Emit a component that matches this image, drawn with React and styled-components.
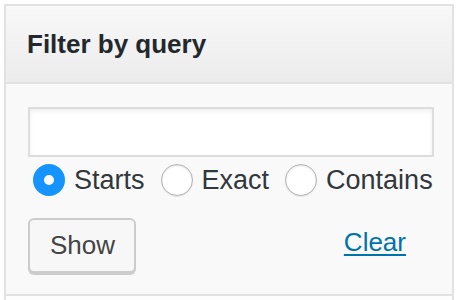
import styled, { createGlobalStyle } from "styled-components";

const baseFont = '"Liberation Sans", Arial, Helvetica, sans-serif';

const GlobalStyle = createGlobalStyle`
    body {
        margin: 0;
        background-color: #ffffff;
        font-family: ${baseFont};
    }
`;

const options = [
    { id: "starts", label: "Starts" },
    { id: "exact", label: "Exact" },
    { id: "contains", label: "Contains" },
];

function App() {
    return (
        <>
            <GlobalStyle />
            <Widget>
                <Header>
                    <Title>Filter by query</Title>
                </Header>
                <Body>
                    <QueryInput type="text" />
                    <RadioRow>
                        {options.map((opt) => (
                            <RadioLabel key={opt.id}>
                                <Radio type="radio" name="mode" defaultChecked={opt.id === "starts"} />
                                {opt.label}
                            </RadioLabel>
                        ))}
                    </RadioRow>
                    <Actions>
                        <ShowButton>Show</ShowButton>
                        <ClearLink href="#">Clear</ClearLink>
                    </Actions>
                </Body>
                <Footer />
            </Widget>
        </>
    );
}

const Widget = styled.div`
    margin: 4px 6px 0 4px;
    border: 2px solid #e2e2e2;
    border-bottom: none;
    background-color: #f9f9f9;
`;

const Header = styled.div`
    height: 76px;
    display: flex;
    align-items: center;
    padding: 0 21px;
    background: linear-gradient(to bottom, #f8f8f8, #ececec);
    border-bottom: 2px solid #e2e2e2;
`;

const Title = styled.h3`
    margin: 0;
    font-size: 26px;
    font-weight: bold;
    color: #23282d;
`;

const Body = styled.div`
    padding: 23px 18px 21px 22px;
    display: flex;
    flex-direction: column;
    border-bottom: 2px solid #e2e2e2;
`;

const QueryInput = styled.input`
    box-sizing: border-box;
    width: 100%;
    height: 50px;
    margin: 0;
    border: 2px solid #dddddd;
    background-color: #ffffff;
    box-shadow: inset 0 2px 4px rgba(0, 0, 0, 0.07);
    outline: none;
    font-family: ${baseFont};
    font-size: 26px;
`;

const RadioRow = styled.div`
    display: flex;
    align-items: center;
    gap: 16px;
    margin-top: 7px;
    padding-left: 5px;
`;

const RadioLabel = styled.label`
    display: flex;
    align-items: center;
    gap: 9px;
    font-size: 27px;
    color: #32373c;
`;

const Radio = styled.input`
    appearance: none;
    box-sizing: border-box;
    width: 32px;
    height: 32px;
    margin: 0;
    border-radius: 50%;
    border: 1px solid #b4b4b4;
    background-color: #ffffff;
    box-shadow: inset 0 1px 2px rgba(0, 0, 0, 0.12), 0 1px 1px rgba(0, 0, 0, 0.08);
    &:checked {
        border: 11px solid #1593ff;
        box-shadow: none;
    }
`;

const Actions = styled.div`
    display: flex;
    align-items: center;
    justify-content: space-between;
    margin-top: 22px;
    padding-right: 28px;
`;

const ShowButton = styled.button`
    box-sizing: border-box;
    width: 108px;
    height: 55px;
    padding: 0 20px;
    border: 2px solid #cccccc;
    border-radius: 6px;
    background-color: #f7f7f7;
    box-shadow: 0 2px 0 #cccccc;
    font-family: ${baseFont};
    font-size: 26px;
    color: #444444;
`;

const ClearLink = styled.a`
    font-size: 26px;
    color: #0073aa;
    text-decoration: underline;
    text-underline-offset: 3px;
    margin-top: -6px;
`;

const Footer = styled.div`
    height: 4px;
    background-color: #fdfdfd;
`;

export default App;
